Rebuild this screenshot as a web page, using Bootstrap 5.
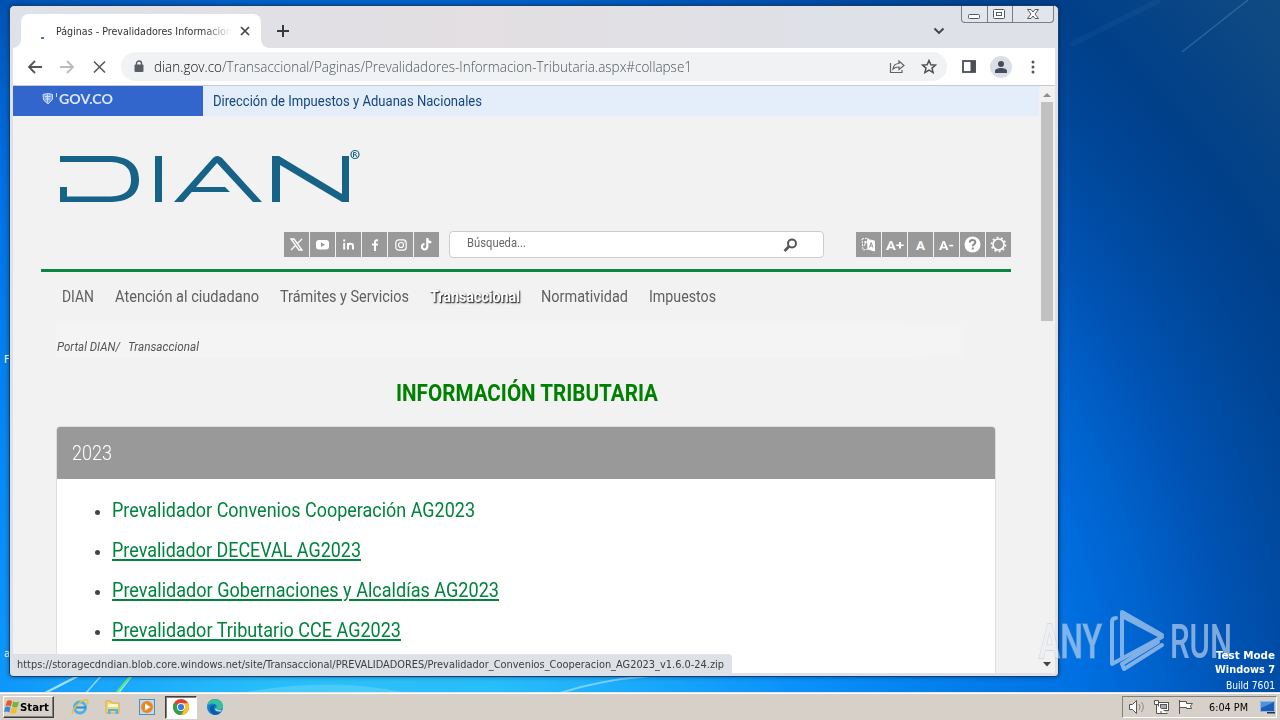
<!DOCTYPE html>
<html lang="es">
<head>
<meta charset="utf-8">
<meta name="viewport" content="width=device-width, initial-scale=1">
<title>Páginas - Prevalidadores Información Tributaria</title>
<link href="https://cdn.jsdelivr.net/npm/bootstrap@5.3.0/dist/css/bootstrap.min.css" rel="stylesheet">
<style>
:root{--tahoma:"DejaVu Sans Condensed","DejaVu Sans",sans-serif}
html,body{width:1280px;height:720px;overflow:hidden}
body{font-family:Roboto,sans-serif;line-height:1;color:#555}
svg{display:block;flex:none}
.fit{display:inline-block;white-space:nowrap;transform-origin:0 50%;flex:none}
.desktop{width:1280px;height:720px;overflow:hidden;background:radial-gradient(circle at 380px 780px,#30c2fa 0,#27bdfb 150px,#0a92fb 420px,#007ae8 620px,#0070e2 706px,#0062cc 785px,#0052b2 865px,#004799 950px,#003f89 1030px,#104a82 1180px)}
.scenery{left:0;top:0}
.dlabel{left:4px;color:#fff;font:11px var(--tahoma)}
.win{left:9px;top:5px;width:1050px;height:672px;border:1px solid #173f6d;border-radius:5px 5px 4px 4px;background:#dee1e8;padding:0 3px 3px 3px;box-shadow:0 0 4px rgba(0,20,60,.5)}
.tabstrip{height:42px;padding-left:8px;background:linear-gradient(90deg,#dee1e8,#e3dfe2 45%,#dee1e8 80%)}
.ctab{width:240px;height:34px;background:#fff;border-radius:8px 8px 0 0;font:11px var(--tahoma);color:#333;padding-left:18px}
.ctab:before,.ctab:after{content:"";position:absolute;bottom:0;width:8px;height:8px}
.ctab:before{left:-8px;background:radial-gradient(circle at 0 0,transparent 7.5px,#fff 8px)}
.ctab:after{right:-8px;background:radial-gradient(circle at 100% 0,transparent 7.5px,#fff 8px)}
.spin{width:3px;height:2px;background:#4a70c0;margin:13px 12px 0 2px}
.ctab .clipt{width:176px;height:16px;overflow:hidden;-webkit-mask-image:linear-gradient(90deg,#000 84%,transparent)}
.winbtns{right:1px;top:0;height:17px;border:1px solid #777d89;border-top:0;border-radius:0 0 4px 4px;background:#e2e5ec}
.winbtns div{width:25px}
.winbtns div+div{border-left:1px solid #777d89}
.winbtns div:last-child{width:41px}
.toolbar{height:38px;background:#fff;border-bottom:1px solid #c9cbd0}
.omni{width:826px;height:29px;border-radius:15px;background:#f0f2f4;margin-left:15px;padding:0 10px 0 13px;font:300 14.5px "Open Sans",sans-serif;color:#4f555a}
.avatar{width:22px;height:22px;border-radius:50%;background:#dadfe7}
.view{height:587px;background:#f2f2f2}
.page{width:1026px;height:587px;overflow:hidden}
.scroll{width:16px;background:#f1f1f1;padding:6px 2px 6px}
.thumb{width:12px;height:219px;background:#c1c1c1;margin-top:5px}
.gov{height:30px;background:#e4edfa;color:#14467f;font-size:14.5px}
.govlogo{width:190px;background:#3366cc;color:#dce7ff;padding:0 0 5px 28px;font:700 13.5px Lato,sans-serif}
.head{height:116px;padding-left:47px}
.logo{padding-top:31px}
.toolsrow{height:27px;padding:0 28px 0 271px}
.sq{width:25px;height:25px;background:#999;color:#fff;font:bold 13.5px Roboto,sans-serif}
.sqs{gap:1px;height:27px;align-items:flex-start}
.sbox{width:375px;height:27px;background:#fff;border:1px solid #ccc;border-radius:4px;margin-left:10px;margin-right:32px;font-size:12.5px;color:#666;padding:0 24px 0 17px;margin-bottom:2px}
.rule{height:3px;background:#0c8546;margin:10px 28px 0}
.mnav{height:51px;padding-left:49px;padding-bottom:2px;gap:21px;font-size:16px;color:#606060}
.mnav .on{color:#fff;font-weight:700;text-shadow:1px 1px 2px #333,1px 1px 1px #555}
.crumb{width:909px;height:35px;background:linear-gradient(90deg,#f4f4f4 90%,#f3f3f3);margin-left:43px;font-style:italic;font-size:13px;color:#555;padding:12px 0 0 1px}
.ttl{height:68px;font-size:23.5px;font-weight:700;color:#008000;padding-left:383px;margin:0;padding-top:2px}
.panel{width:940px;height:270px;margin-left:43px;background:#fff;border:1px solid #ddd;border-radius:4px}
.panel .hd{height:52px;background:#999;border-radius:3px 3px 0 0;color:#fff;font-size:21px;font-weight:300;padding:1px 0 0 15px}
.panel ul{list-style:none;margin:12px 0 0;padding:0 0 0 37px}
.panel li{height:40px;font-size:19.5px}
.dot{width:5px;height:5px;border-radius:50%;background:#444;margin:2px 12px 0 1px}
.panel a{color:#00843d;text-decoration:none;line-height:26px}
.panel a.u{text-decoration:underline;text-decoration-thickness:2px;text-underline-offset:2px}
.status{left:0;bottom:0;width:719px;height:19px;background:#dee1e6;border-radius:0 4px 0 0;font:11px var(--tahoma);color:#3c4043;padding:1px 0 0 4px}
.taskbar{left:0;top:692px;width:1280px;height:28px;background:#d6d0c9;border-top:1px solid #e8e4dd;box-shadow:inset 0 1px #fff;padding:3px 3px 2px;font:11px var(--tahoma);color:#000}
.start{width:51px;height:22px;border:1px solid;border-color:#fff #404040 #404040 #fff;box-shadow:inset -1px -1px #808080;font-weight:700}
.act{width:32px;height:23px;background:#fff;border:1px solid;border-color:#404040 #fff #fff #404040;box-shadow:inset 1px 1px #808080}
.tray{width:155px;height:22px;border:1px solid;border-color:#808080 #fff #fff #808080;padding-left:5px}
.wm{left:1038px;top:608px;opacity:.55}
.wm text{font-family:Roboto,sans-serif;font-weight:500;font-size:49px}
.build{right:5px;top:649px;color:#fff;font:11px/14px var(--tahoma);text-align:right}
</style>
</head>
<body>
<div class="desktop position-relative">
  <svg class="scenery position-absolute" width="1280" height="720" fill="none">
    <path d="M1182 52L1248 0" stroke="#8fc0e8" stroke-opacity=".25" stroke-width="1.500"/>
    <path d="M1070 45L1160 0" stroke="#5f9fd8" stroke-opacity=".08" stroke-width="6"/>
    <path d="M45 693L78 676M118 693L131 676" stroke="#e0fbff" stroke-opacity=".7" stroke-width="2.500"/>
    <path d="M86 693L101 676" stroke="#bdf1ff" stroke-opacity=".7" stroke-width="1.500"/>
    <path d="M117 692L130 677" stroke="#58e878" stroke-width="2"/>
    <path d="M560 693Q600 680 650 676" stroke="#9be0ff" stroke-opacity=".7" stroke-width="2"/>
    <path d="M240 693Q330 676 408 693" fill="#6fdcf5" fill-opacity=".45"/>
  </svg>
  <div class="dlabel position-absolute" style="top:353px">F</div>
  <div class="dlabel position-absolute" style="top:647px">a</div>

  <div class="win position-absolute">
    <div class="tabstrip d-flex align-items-end position-relative">
      <div class="ctab d-flex align-items-center position-relative">
        <div class="spin"></div>
        <div class="clipt d-flex align-items-center"><span class="fit" data-w="176">Páginas - Prevalidadores Informacion</span></div>
        <svg class="ms-2" width="10" height="10" stroke="#444" stroke-width="1.700"><path d="M1 1l8 8M9 1l-8 8"/></svg>
      </div>
      <svg class="align-self-center mt-2" style="margin-left:16px" width="12" height="12" stroke="#333a42" stroke-width="2"><path d="M6 0v12M0 6h12"/></svg>
      <svg class="align-self-center mt-2" style="margin-left:644px" width="12" height="8" stroke="#3d434b" stroke-width="1.900" fill="none"><path d="M1.500 1.500l4.500 4.500 4.500-4.500"/></svg>
      <div class="winbtns d-flex position-absolute">
        <div><svg width="25" height="16" fill="#fff" stroke="#555a66"><rect x="6.500" y="8.500" width="11" height="4" rx="1"/></svg></div>
        <div><svg width="24" height="16" fill="#fff" stroke="#555a66"><rect x="5.500" y="3.500" width="11" height="9" rx="1"/><rect x="8.500" y="6.500" width="5" height="3"/></svg></div>
        <div><svg width="40" height="16" fill="#fff" stroke="#555a66"><path d="M14.500 3.500h3.500l2 2.500 2-2.500h3.500l-3.500 4.500 3.500 4.500h-3.500l-2-2.500-2 2.500h-3.500l3.500-4.500z"/></svg></div>
      </div>
    </div>
    <div class="toolbar d-flex align-items-center">
      <svg style="margin-left:14px" width="16" height="14" fill="none" stroke="#50555a" stroke-width="1.800"><path d="M15 7H2M8 1L2 7l6 6"/></svg>
      <svg style="margin-left:16px" width="16" height="14" fill="none" stroke="#b9bbbd" stroke-width="1.800"><path d="M1 7h13M8 1l6 6-6 6"/></svg>
      <svg style="margin-left:18px" width="13" height="14" fill="none" stroke="#50555a" stroke-width="1.500"><path d="M1 1.500l11 11M12 1.500l-11 11"/></svg>
      <div class="omni d-flex align-items-center">
        <svg width="10" height="13"><path d="M2.500 5V3.500a2.500 2.500 0 0 1 5 0V5" fill="none" stroke="#5a5f64" stroke-width="1.400"/><rect x=".5" y="4.500" width="9" height="7.500" rx="1" fill="#5a5f64"/></svg>
        <span class="fit" style="margin-left:10px" data-w="538"><span style="color:#111">dian.gov.co</span>/Transaccional/Paginas/Prevalidadores-Informacion-Tributaria.aspx#collapse1</span>
        <svg class="ms-auto" width="16" height="15" fill="none" stroke="#5f6368" stroke-width="1.200"><path d="M1.500 4v9.500h11.500V11M4 10c.5-4 2.500-5.500 6-5.500V2l5 4.500-5 4V8C7 8 5.500 8.500 4 10z"/></svg>
        <svg style="margin-left:16px" width="16" height="15" viewBox="0 0 16 15" fill="none" stroke="#4d5257" stroke-width="1.500"><path d="M8 1.500l1.900 4.200 4.600.4-3.500 3 1.100 4.500L8 11.200l-4.100 2.400L5 9.100l-3.500-3 4.600-.4z"/></svg>
      </div>
      <svg style="margin-left:15px" width="14" height="13"><rect x="1" y="1" width="12" height="11" fill="none" stroke="#4a4e55" stroke-width="1.800"/><path d="M8.500 1h5v11h-5z" fill="#4a4e55"/></svg>
      <div class="avatar d-flex align-items-center justify-content-center" style="margin-left:14px"><svg width="12" height="12" fill="#454c5c"><circle cx="6" cy="3" r="3"/><path d="M0 12V10c0-4 12-4 12 0v2z"/></svg></div>
      <svg style="margin-left:19px" width="4" height="14" fill="#50555a"><circle cx="2" cy="2" r="1.500"/><circle cx="2" cy="7" r="1.500"/><circle cx="2" cy="12" r="1.500"/></svg>
    </div>

    <div class="view d-flex position-relative">
      <div class="page">
        <div class="gov d-flex align-items-stretch">
          <div class="govlogo d-flex align-items-center">
            <svg width="18" height="14" fill="none" stroke="#cddcff"><path d="M2 2.500l5-1 4.500 1v5L7 12 2.500 8z" fill="#7b9fe6"/><path d="M4 4.500h5.500M4.500 7h4.500M6.500 2.500v8"/><path d="M15.500 1v4"/></svg>
            <span class="fit" data-w="54">GOV.CO</span>
          </div>
          <span class="fit align-self-center pt-1" style="margin-left:10px;margin-top:-2px" data-w="269">Dirección de Impuestos y Aduanas Nacionales</span>
        </div>
        <div class="head"><div class="logo">
          <svg width="304" height="60" viewBox="60 147 304 60" fill="#176387" role="img" aria-label="DIAN">
            <path d="M60 156h48c20 0 31 8 31 23.500S129 202 108 202H60v-15h7v9.500h41c16 0 23-5 23-17s-7-17.500-23-17.500H60z"/>
            <path d="M155 156h7v46h-7zM174 202l39-44q4-4 9 0l40 44h-9l-36-39-34 39zM193 187h32l5 5h-41zM272 156h7l63 38v-38h7v46h-7l-62-37v37h-8z"/>
            <circle cx="355" cy="154.500" r="4" fill="none" stroke="#176387" stroke-width="1.200"/><path d="M353.500 157v-4.500h2q1.500 1.200 0 2.300h-2m2 0l1.500 2.200" fill="none" stroke="#176387"/>
          </svg></div>
        </div>
        <div class="toolsrow d-flex align-items-center">
          <div class="d-flex sqs">
            <div class="sq d-flex align-items-center justify-content-center"><svg width="13" height="13" fill="none" stroke="#fff"><path d="M1 1h3l8 11H9zM12 1L7.500 5.500M5.500 7.500L1 12" stroke-width="1.300"/></svg></div>
            <div class="sq d-flex align-items-center justify-content-center"><svg width="13" height="10"><rect width="13" height="9.500" rx="3" fill="#fff"/><path d="M5 2.500v4.500l4-2.200z" fill="#999"/></svg></div>
            <div class="sq d-flex align-items-center justify-content-center"><svg width="11" height="11" fill="none" stroke="#fff" stroke-width="2"><path d="M1.200 4v6.500M1.200 .5v2M5 10.500V4M5 7c0-3 5-3 5 0v3.500"/></svg></div>
            <div class="sq d-flex align-items-center justify-content-center"><svg width="8" height="12" fill="none" stroke="#fff" stroke-width="2"><path d="M7 1.300H6Q4 1.300 4 3.500V12M1 5.500h6"/></svg></div>
            <div class="sq d-flex align-items-center justify-content-center"><svg width="12" height="12" fill="none" stroke="#fff" stroke-width="1.200"><rect x=".8" y=".8" width="10.400" height="10.400" rx="3"/><circle cx="6" cy="6" r="2.500"/><path d="M8.800 3.200h.8"/></svg></div>
            <div class="sq d-flex align-items-center justify-content-center"><svg width="11" height="13" fill="none" stroke="#fff" stroke-width="2.200"><path d="M6.300 0v8.500A2.700 2.700 0 1 1 3.500 6M6.300 1q.5 3 4 3.300"/></svg></div>
          </div>
          <div class="sbox d-flex align-items-center"><span class="fit" style="margin-bottom:3px" data-w="59">Búsqueda...</span>
            <svg class="ms-auto" width="16" height="14" fill="none" stroke="#555" stroke-width="2"><circle cx="9" cy="5.500" r="4"/><path d="M6 8.500L1.500 13" stroke-width="2.600"/></svg>
          </div>
          <div class="d-flex sqs">
            <div class="sq d-flex align-items-center justify-content-center"><svg width="15" height="15" fill="none" stroke="#fff"><path d="M1 2l6-1 1 11-6 1z" stroke-dasharray="2 1"/><path d="M6.500 2.500L13.500 4v10L7 12z" fill="#fff"/><path d="M8.500 10.500l1.700-5 1.700 5M9 9h2.500" stroke="#999"/><path d="M3 5h3M4.500 4v2L3 9"/></svg></div>
            <div class="sq d-flex align-items-center justify-content-center"><span class="fit" data-w="18">A+</span></div>
            <div class="sq d-flex align-items-center justify-content-center">A</div>
            <div class="sq d-flex align-items-center justify-content-center"><span class="fit" data-w="15">A-</span></div>
            <div class="sq d-flex align-items-center justify-content-center"><svg width="17" height="17"><circle cx="8.500" cy="8.500" r="8" fill="#fff"/><path d="M5.800 6.500c0-3.500 5.500-3.300 5.500-.3 0 2-2.500 2-2.500 4M8.800 11.600v2" fill="none" stroke="#888" stroke-width="2"/></svg></div>
            <div class="sq d-flex align-items-center justify-content-center"><svg width="17" height="17" fill="none" stroke="#fff"><circle cx="8.500" cy="8.500" r="5.500" stroke-width="1.600"/><circle cx="8.500" cy="8.500" r="7" stroke-width="1.600" stroke-dasharray="2 2.400"/></svg></div>
          </div>
        </div>
        <div class="rule" style="width:970px"></div>
        <div class="mnav d-flex align-items-center">
          <span class="fit" data-w="32">DIAN</span><span class="fit" data-w="144">Atención al ciudadano</span><span class="fit" data-w="129">Trámites y Servicios</span><span class="fit on" data-w="90">Transaccional</span><span class="fit" data-w="87">Normatividad</span><span class="fit" data-w="67">Impuestos</span>
        </div>
        <div class="crumb d-flex align-items-center"><span class="fit" data-w="63">Portal DIAN/</span><span class="fit ms-2" data-w="71">Transaccional</span></div>
        <h1 class="ttl d-flex align-items-center"><span class="fit" data-w="262">INFORMACIÓN TRIBUTARIA</span></h1>
        <div class="panel">
          <div class="hd d-flex align-items-center"><span class="fit" data-w="40">2023</span></div>
          <ul>
            <li class="d-flex align-items-center"><i class="dot"></i><a class="fit" data-w="363">Prevalidador Convenios Cooperación AG2023</a></li>
            <li class="d-flex align-items-center"><i class="dot"></i><a class="fit u" data-w="249">Prevalidador DECEVAL AG2023</a></li>
            <li class="d-flex align-items-center"><i class="dot"></i><a class="fit u" data-w="387">Prevalidador Gobernaciones y Alcaldías AG2023</a></li>
            <li class="d-flex align-items-center"><i class="dot"></i><a class="fit u" data-w="289">Prevalidador Tributario CCE AG2023</a></li>
          </ul>
        </div>
      </div>
      <div class="scroll d-flex flex-column align-items-center">
        <svg width="8" height="5" fill="#8f8f8f"><path d="M0 5l4-4 4 4z"/></svg>
        <div class="thumb"></div>
        <svg class="mt-auto" width="8" height="5" fill="#444"><path d="M0 0h8L4 4.500z"/></svg>
      </div>
      <div class="status position-absolute d-flex align-items-center"><span class="fit" data-w="707">https://storagecdndian.blob.core.windows.net/site/Transaccional/PREVALIDADORES/Prevalidador_Convenios_Cooperacion_AG2023_v1.6.0-24.zip</span></div>
    </div>
  </div>

  <svg class="wm position-absolute" width="196" height="66" viewBox="1038 608 196 66" fill="#e8eef8">
    <text x="1039" y="658" textLength="63" lengthAdjust="spacingAndGlyphs" stroke="#a8a8a8" stroke-width="1.800" stroke-opacity=".6" paint-order="stroke">ANY</text>
    <text x="1170" y="658" textLength="62" lengthAdjust="spacingAndGlyphs">RUN</text>
    <g fill="none" stroke="#e8eef8" stroke-width="4" stroke-linejoin="round" stroke-linecap="round"><path d="M1116 618q-4 0-4 4v42l50-27-38-20M1122 656v-44l40 23M1162 645l-38 24-2-5 36-22"/></g>
  </svg>
  <div class="build position-absolute"><b class="fit" data-w="59">Test Mode</b><br><b class="fit" data-w="60">Windows 7</b><br><span class="fit" style="padding-top:2px" data-w="49">Build 7601</span></div>

  <div class="taskbar position-absolute d-flex align-items-center">
    <div class="start d-flex align-items-center">
      <svg width="16" height="16"><path d="M3 2q3-1.500 5 .2L6.800 7.500Q4.500 6 1.500 7z" fill="#e8582a"/><path d="M9 2.500q3 1.500 6 0L13.500 8q-3 1-5.500-.3z" fill="#77b82a"/><path d="M1.200 8q3-1 5.300.4L5.300 13.500Q3 12 0 13z" fill="#3a86d8"/><path d="M7.700 8.800q3 1.200 5.600.2L12 14q-3 1.200-5.600 0z" fill="#f4bd22"/></svg>
      <span class="fit" data-w="29">Start</span>
    </div>
    <svg style="margin-left:17px" width="18" height="18" fill="none"><circle cx="9" cy="9.500" r="5.500" stroke="#4bb3ea" stroke-width="3"/><path d="M5 9.500h10" stroke="#248fd2" stroke-width="2"/><path d="M2 16C-2 13 13-1 16.500 2.500q1 1-.5 4" stroke="#e8c13e" stroke-width="1.500"/></svg>
    <svg style="margin-left:16px" width="16" height="16"><path d="M1 2h5l1 2h7v10H1z" fill="#f2d675" stroke="#d2b04d"/><path d="M3 5h10v3H3z" fill="#fff6c8"/><path d="M3 15V10h10v5h-2.500v-3h-5v3z" fill="#5bb0e2"/></svg>
    <svg style="margin-left:18px" width="16" height="16"><rect x=".5" y=".5" width="15" height="15" fill="#b9dcf2" stroke="#4d8fbf"/><circle cx="8" cy="8" r="6" fill="#f0851d"/><path d="M6 4.500v7l5.500-3.500z" fill="#fff"/></svg>
    <div class="act d-flex align-items-center justify-content-center" style="margin-left:10px"><svg width="16" height="16"><circle cx="8" cy="8" r="8" fill="#e2402f"/><path d="M8 8L1.100 4A8 8 0 0 0 8 16l4-6z" fill="#2da14b"/><path d="M8 4.200h7.100A8 8 0 0 1 8 16l3.800-6z" fill="#fbc51d"/><circle cx="8" cy="8" r="4" fill="#fff"/><circle cx="8" cy="8" r="3.100" fill="#3b78e7"/></svg></div>
    <svg style="margin-left:10px" width="16" height="16"><circle cx="8" cy="8" r="8" fill="#1480d0"/><path d="M.3 6.500C2-2 15-2 16 7q0 4-5 4-2 0-2-1.500 2-3-1-4.500-4-1.500-7.700 1.500z" fill="#35c19b"/><path d="M3 9q2-4 5.500-3Q5 9 8.500 12.500q3 2 6-.5Q11 17 6.500 15.500 2.500 13 3 9z" fill="#0b5aa6"/><path d="M9 9q0 2.300 3.500 2.300h2.500l-1.500 1.200q-4 .5-5.500-2z" fill="#d6e2e6"/></svg>
    <div class="tray ms-auto d-flex align-items-center">
      <svg width="18" height="16" fill="#fff" stroke="#555"><path d="M1.500 5.500h3l4-4v13l-4-4h-3z"/><path d="M11 5q2 3 0 6M13.500 3q3.500 5 0 10" fill="none" stroke="#888"/></svg>
      <svg style="margin-left:7px" width="17" height="16" fill="#fff" stroke="#555"><rect x="5.500" y="3.500" width="10" height="8"/><rect x="7.500" y="5.500" width="6" height="4" fill="#aaa"/><path d="M1.500 1.500h4v4h-4zM3.500 6v8.500h11M8 14v-2"/></svg>
      <svg style="margin-left:7px" width="17" height="16" fill="#fff" stroke="#555"><path d="M2.500 1v14M2.500 2.500h7v2h6l-2 2.500 1 2.500h-5v-1h-7z"/></svg>
      <span class="fit" style="margin-left:15px" data-w="39">6:04 PM</span>
      <svg style="margin-left:12px" width="16" height="14"><rect x=".5" y="1.500" width="14" height="10" fill="#1d5cb6" stroke="#8bb8e8"/><path d="M1 2h13L1 8z" fill="#4b93e0"/><path d="M7 12h8v1.500H7z" fill="#234"/></svg>
    </div>
  </div>
</div>
<script src="https://cdn.jsdelivr.net/npm/bootstrap@5.3.0/dist/js/bootstrap.bundle.min.js"></script>
<script>
// Condense each label to its measured width.
document.querySelectorAll('.fit').forEach(function(el){
  var n = el.getBoundingClientRect().width, w = +el.dataset.w;
  el.style.transform = 'scaleX(' + w / n + ')';
  el.style.marginRight = (w - n) + 'px';
});
</script>
</body>
</html>
